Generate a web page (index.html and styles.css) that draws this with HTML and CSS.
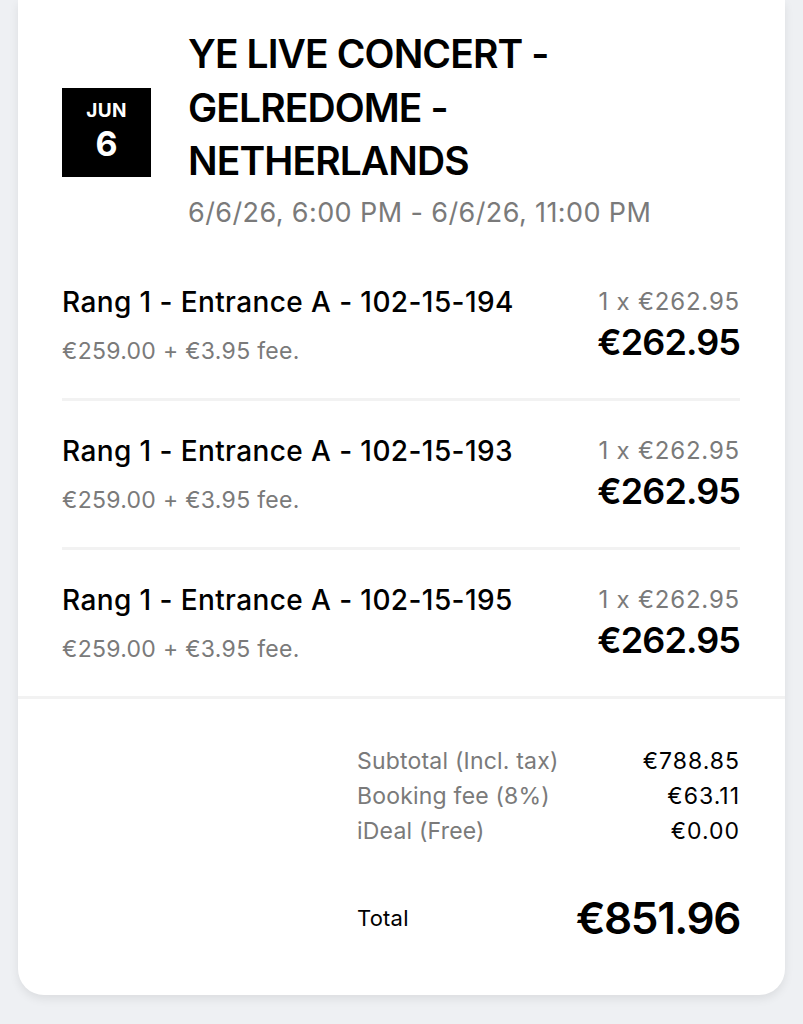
FILE: index.html
```html
<!DOCTYPE html>
<html>
	<head>
		<meta charset="utf-8">
		<title>Order summary</title>
		<link rel="stylesheet" href="styles.css">
	</head>
	<body>
		<div class="card">
			<div class="event">
				<div class="date-box">
					<span class="month">JUN</span>
					<span class="day">6</span>
				</div>
				<div class="event-info">
					<h1 class="event-title">YE LIVE CONCERT - GELREDOME - NETHERLANDS</h1>
					<div class="event-time">6/6/26, 6:00 PM - 6/6/26, 11:00 PM</div>
				</div>
			</div>

			<div class="tickets">
				<div class="ticket">
					<div class="ticket-left">
						<div class="ticket-name">Rang 1 - Entrance A - 102-15-194</div>
						<div class="ticket-fee">€259.00 + €3.95 fee.</div>
					</div>
					<div class="ticket-right">
						<div class="ticket-qty">1 x €262.95</div>
						<div class="ticket-price">€262.95</div>
					</div>
				</div>
				<div class="ticket">
					<div class="ticket-left">
						<div class="ticket-name">Rang 1 - Entrance A - 102-15-193</div>
						<div class="ticket-fee">€259.00 + €3.95 fee.</div>
					</div>
					<div class="ticket-right">
						<div class="ticket-qty">1 x €262.95</div>
						<div class="ticket-price">€262.95</div>
					</div>
				</div>
				<div class="ticket">
					<div class="ticket-left">
						<div class="ticket-name">Rang 1 - Entrance A - 102-15-195</div>
						<div class="ticket-fee">€259.00 + €3.95 fee.</div>
					</div>
					<div class="ticket-right">
						<div class="ticket-qty">1 x €262.95</div>
						<div class="ticket-price">€262.95</div>
					</div>
				</div>
			</div>

			<div class="summary">
				<div class="summary-lines">
					<div class="line"><span class="label">Subtotal (Incl. tax)</span><span class="value">€788.85</span></div>
					<div class="line"><span class="label">Booking fee (8%)</span><span class="value">€63.11</span></div>
					<div class="line"><span class="label">iDeal (Free)</span><span class="value">€0.00</span></div>
					<div class="total"><span class="total-label">Total</span><span class="total-value">€851.96</span></div>
				</div>
			</div>
		</div>
	</body>
</html>
```

FILE: styles.css
```css
* {
	margin: 0;
	padding: 0;
	box-sizing: border-box;
}
body {
	background-color: #eef0f3;
	font-family: Inter, "Noto Sans", sans-serif;
	color: #000;
	height: 1024px;
	overflow: hidden;
}
.card {
	margin: 0 18px;
	background: #fff;
	border-radius: 0 0 26px 26px;
	box-shadow: 0 4px 10px rgba(0, 0, 0, 0.08);
}

/* header */
.event {
	display: flex;
	align-items: center;
	gap: 37px;
	padding: 27px 45px 22px 44px;
}
.date-box {
	width: 89px;
	height: 89px;
	margin-top: 8px;
	flex-shrink: 0;
	background: #000;
	color: #fff;
	display: flex;
	flex-direction: column;
	align-items: center;
	justify-content: center;
	font-weight: 700;
}
.month {
	font-size: 19px;
	line-height: 20px;
	letter-spacing: 0.3px;
}
.day {
	font-size: 34px;
	line-height: 40px;
	margin-top: 3px;
}
.event-title {
	font-size: 39px;
	font-weight: 600;
	line-height: 53.5px;
	letter-spacing: -0.9px;
	width: 440px;
}
.event-time {
	font-size: 27px;
	line-height: 34px;
	color: #7a7a7a;
	letter-spacing: 0.4px;
	margin-top: 8.5px;
}

/* tickets */
.tickets {
	padding: 0 45px 0 44px;
}
.ticket {
	display: flex;
	justify-content: space-between;
	padding: 32px 0;
	border-bottom: 3px solid #f2f2f2;
}
.ticket:last-child {
	border-bottom: none;
}
.ticket-name {
	font-size: 28px;
	line-height: 36px;
	font-weight: 500;
	letter-spacing: 0.4px;
}
.ticket-fee {
	font-size: 23px;
	line-height: 30px;
	color: #7a7a7a;
	letter-spacing: 0.3px;
	margin-top: 16px;
}
.ticket-right {
	text-align: right;
}
.ticket-qty {
	font-size: 24px;
	line-height: 36px;
	color: #7a7a7a;
	letter-spacing: 0.8px;
}
.ticket-price {
	font-size: 36px;
	line-height: 44px;
	font-weight: 600;
	letter-spacing: -0.9px;
}

/* summary */
.summary {
	border-top: 3px solid #f2f2f2;
	padding: 45px 45px 49px 0;
	display: flex;
	justify-content: flex-end;
}
.summary-lines {
	width: 383px;
}
.line {
	display: flex;
	justify-content: space-between;
	font-size: 23px;
	line-height: 35px;
	letter-spacing: 0.2px;
}
.label {
	color: #7a7a7a;
}
.value {
	letter-spacing: 1px;
}
.total {
	display: flex;
	justify-content: space-between;
	align-items: center;
	margin-top: 41px;
	height: 56px;
}
.total-label {
	font-size: 22px;
	letter-spacing: 0.2px;
}
.total-value {
	font-size: 44px;
	font-weight: 600;
	letter-spacing: -1.4px;
}
```
